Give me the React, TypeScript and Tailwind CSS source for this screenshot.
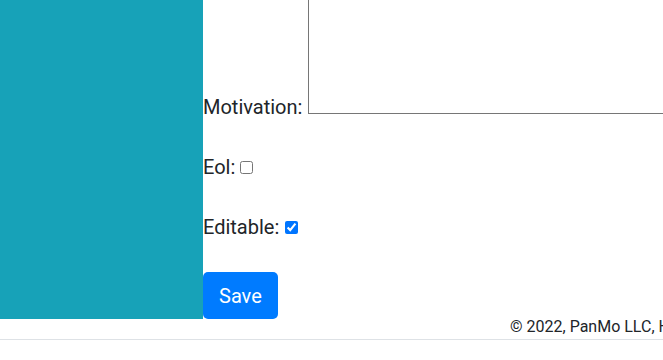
import { useState } from "react";

// Main Component
export default function App() {
  return (
    <div className="h-[360px] w-[663px] overflow-hidden bg-white font-['Roboto',sans-serif] text-[#212529]">
      {/* page is scrolled down a bit, top of the form is out of view */}
      <div className="-mt-[39px] flex">
        <aside className="w-[203px] shrink-0 bg-[#17a2b8]" />
        <EditForm />
      </div>
      <Footer />
    </div>
  );
}

// Helper Components

// Form with motivation, eol and editable fields
function EditForm() {
  const [eol, setEol] = useState(false);
  const [editable, setEditable] = useState(true);
  return (
    <form className="min-w-0 flex-1 text-[20px] leading-[30px]">
      <div className="mb-[30px] whitespace-nowrap">
        <label htmlFor="motivation">Motivation: </label>
        <textarea
          id="motivation"
          className="ml-[1px] inline-block h-[153px] w-[420px] resize-none border border-[#767676] align-baseline"
        />
      </div>
      <div className="mb-[30px] whitespace-nowrap">
        <label htmlFor="eol">Eol: </label>
        <input
          id="eol"
          type="checkbox"
          checked={eol}
          onChange={(e) => setEol(e.target.checked)}
        />
      </div>
      <div className="mb-[30px] whitespace-nowrap">
        <label htmlFor="editable">Editable: </label>
        <input
          id="editable"
          type="checkbox"
          className="ml-[1px]"
          checked={editable}
          onChange={(e) => setEditable(e.target.checked)}
        />
      </div>
      <button
        type="button"
        className="block h-[47px] rounded-[5px] bg-[#007bff] px-[16px] text-[20px] leading-[30px] text-white"
      >
        Save
      </button>
    </form>
  );
}

// Copyright line
function Footer() {
  return (
    <footer className="h-[21px] overflow-hidden whitespace-nowrap border-b border-[#dee2e6] pl-[510px] text-[16px] leading-[16px]">
      © 2022, PanMo LLC, Hamburg
    </footer>
  );
}
